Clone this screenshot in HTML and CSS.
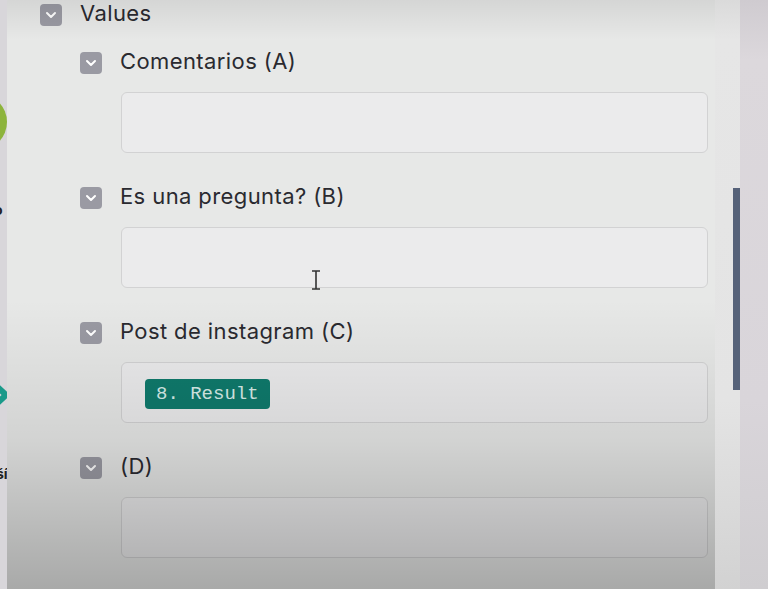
FILE: index.html
```html
<!DOCTYPE html>
<html lang="en">
<head>
  <meta charset="UTF-8">
  <meta name="viewport" content="width=device-width, initial-scale=1.0">
  <title>Values</title>
  <link rel="stylesheet" href="styles.css">
</head>
<body>
  <!-- edge of the node list on the left -->
  <div class="side">
    <div class="side-dot"></div>
    <div class="side-text side-o">o</div>
    <div class="side-x">
      <svg width="20" height="34" viewBox="0 0 20 34"><path d="M2 2 L18 17 L2 32" fill="none" stroke="#1a9a8a" stroke-width="6"/></svg>
    </div>
    <div class="side-text side-si">ší</div>
  </div>

  <div class="panel">
    <div class="content">
      <div class="row">
        <span class="toggle"><svg width="12" height="8" viewBox="0 0 12 8"><path d="M2 2 L6 6 L10 2" fill="none" stroke="#fff" stroke-width="2" stroke-linecap="round" stroke-linejoin="round"/></svg></span>
        <span class="label">Values</span>
      </div>

      <div class="children">
        <div class="field">
          <div class="row">
            <span class="toggle"><svg width="12" height="8" viewBox="0 0 12 8"><path d="M2 2 L6 6 L10 2" fill="none" stroke="#fff" stroke-width="2" stroke-linecap="round" stroke-linejoin="round"/></svg></span>
            <span class="label">Comentarios (A)</span>
          </div>
          <div class="input"></div>
        </div>

        <div class="field">
          <div class="row">
            <span class="toggle"><svg width="12" height="8" viewBox="0 0 12 8"><path d="M2 2 L6 6 L10 2" fill="none" stroke="#fff" stroke-width="2" stroke-linecap="round" stroke-linejoin="round"/></svg></span>
            <span class="label">Es una pregunta? (B)</span>
          </div>
          <div class="input">
            <svg class="ibeam" width="10" height="20" viewBox="0 0 10 20"><path d="M1 1 H9 M5 1 V19 M1 19 H9" fill="none" stroke="#333" stroke-width="1.6"/></svg>
          </div>
        </div>

        <div class="field">
          <div class="row">
            <span class="toggle"><svg width="12" height="8" viewBox="0 0 12 8"><path d="M2 2 L6 6 L10 2" fill="none" stroke="#fff" stroke-width="2" stroke-linecap="round" stroke-linejoin="round"/></svg></span>
            <span class="label">Post de instagram (C)</span>
          </div>
          <div class="input">
            <span class="pill">8. Result</span>
          </div>
        </div>

        <div class="field">
          <div class="row">
            <span class="toggle"><svg width="12" height="8" viewBox="0 0 12 8"><path d="M2 2 L6 6 L10 2" fill="none" stroke="#fff" stroke-width="2" stroke-linecap="round" stroke-linejoin="round"/></svg></span>
            <span class="label">(D)</span>
          </div>
          <div class="input"></div>
        </div>
      </div>
    </div>

    <div class="track">
      <div class="thumb"></div>
    </div>
  </div>

  <div class="edge"></div>
</body>
</html>
```

FILE: styles.css
```css
* {
  margin: 0;
  padding: 0;
  box-sizing: border-box;
}

body {
  font-family: Inter, "Noto Sans", sans-serif;
  color: #2a2a30;
  background: #e6e6e6;
  display: flex;
  height: 589px;
  overflow: hidden;
}

/* left strip */
.side {
  width: 7px;
  flex-shrink: 0;
  background: #d8d6da;
  overflow: hidden;
  display: flex;
  flex-direction: column;
}

.side-dot {
  width: 56px;
  height: 56px;
  border-radius: 50%;
  background: #8db43c;
  margin: 94px 0 0 -49px;
  flex-shrink: 0;
}

.side-text {
  font-size: 14px;
  font-weight: 700;
  color: #222;
  margin-left: -6px;
  line-height: 16px;
}

.side-o {
  margin-top: 52px;
}

.side-x {
  margin: 160px 0 0 -12px;
  flex-shrink: 0;
}

.side-si {
  margin-top: 50px;
  margin-left: -4px;
}

/* main panel */
.panel {
  width: 733px;
  flex-shrink: 0;
  display: flex;
  position: relative;
}

.content {
  width: 708px;
  padding: 3px 0 0 33px;
  position: relative;
  background: #e7e8e7;
}

/* camera shading over the panel */
.content::after {
  content: "";
  position: absolute;
  inset: 0;
  pointer-events: none;
  background: linear-gradient(to bottom,
    rgba(0, 0, 0, 0.08) 0,
    rgba(0, 0, 0, 0) 40px,
    rgba(0, 0, 0, 0) 300px,
    rgba(0, 0, 0, 0.09) 440px,
    rgba(0, 0, 0, 0.27) 589px);
}

.row {
  display: flex;
  align-items: center;
  height: 23px;
}

.toggle {
  width: 22px;
  height: 22px;
  border-radius: 4px;
  background: #9a9aa3;
  display: flex;
  align-items: center;
  justify-content: center;
  flex-shrink: 0;
}

.label {
  font-size: 22px;
  line-height: 23px;
  margin: -3px 0 0 18px;
  letter-spacing: 0.4px;
}

.children {
  margin-left: 40px;
  padding-top: 25px;
}

.field {
  padding-bottom: 33px;
}

.input {
  margin: 18px 0 0 41px;
  width: 587px;
  height: 61px;
  border: 1px solid #d2d2d3;
  border-radius: 6px;
  background: #ebebec;
  padding: 16px 0 0 23px;
  position: relative;
}

.ibeam {
  position: absolute;
  left: 189px;
  top: 42px;
}

.pill {
  display: inline-block;
  height: 30px;
  line-height: 30px;
  padding: 0 11px;
  border-radius: 4px;
  background: #0f7a6c;
  color: #d6ece8;
  font-family: "Liberation Mono", monospace;
  font-size: 19px;
}

/* scrollbar area */
.track {
  flex: 1;
  background: linear-gradient(to bottom, #dadada 0, #e6e6e6 40px, #e4e4e4 400px, #d2d2d2 589px);
  display: flex;
  justify-content: flex-end;
}

.thumb {
  width: 7px;
  height: 202px;
  margin-top: 188px;
  background: #566279;
}

.edge {
  flex: 1;
  background: linear-gradient(to bottom, #cfcbd0 0, #dcd8dc 60px, #d9d5da 400px, #cfcdd0 589px);
}
```
